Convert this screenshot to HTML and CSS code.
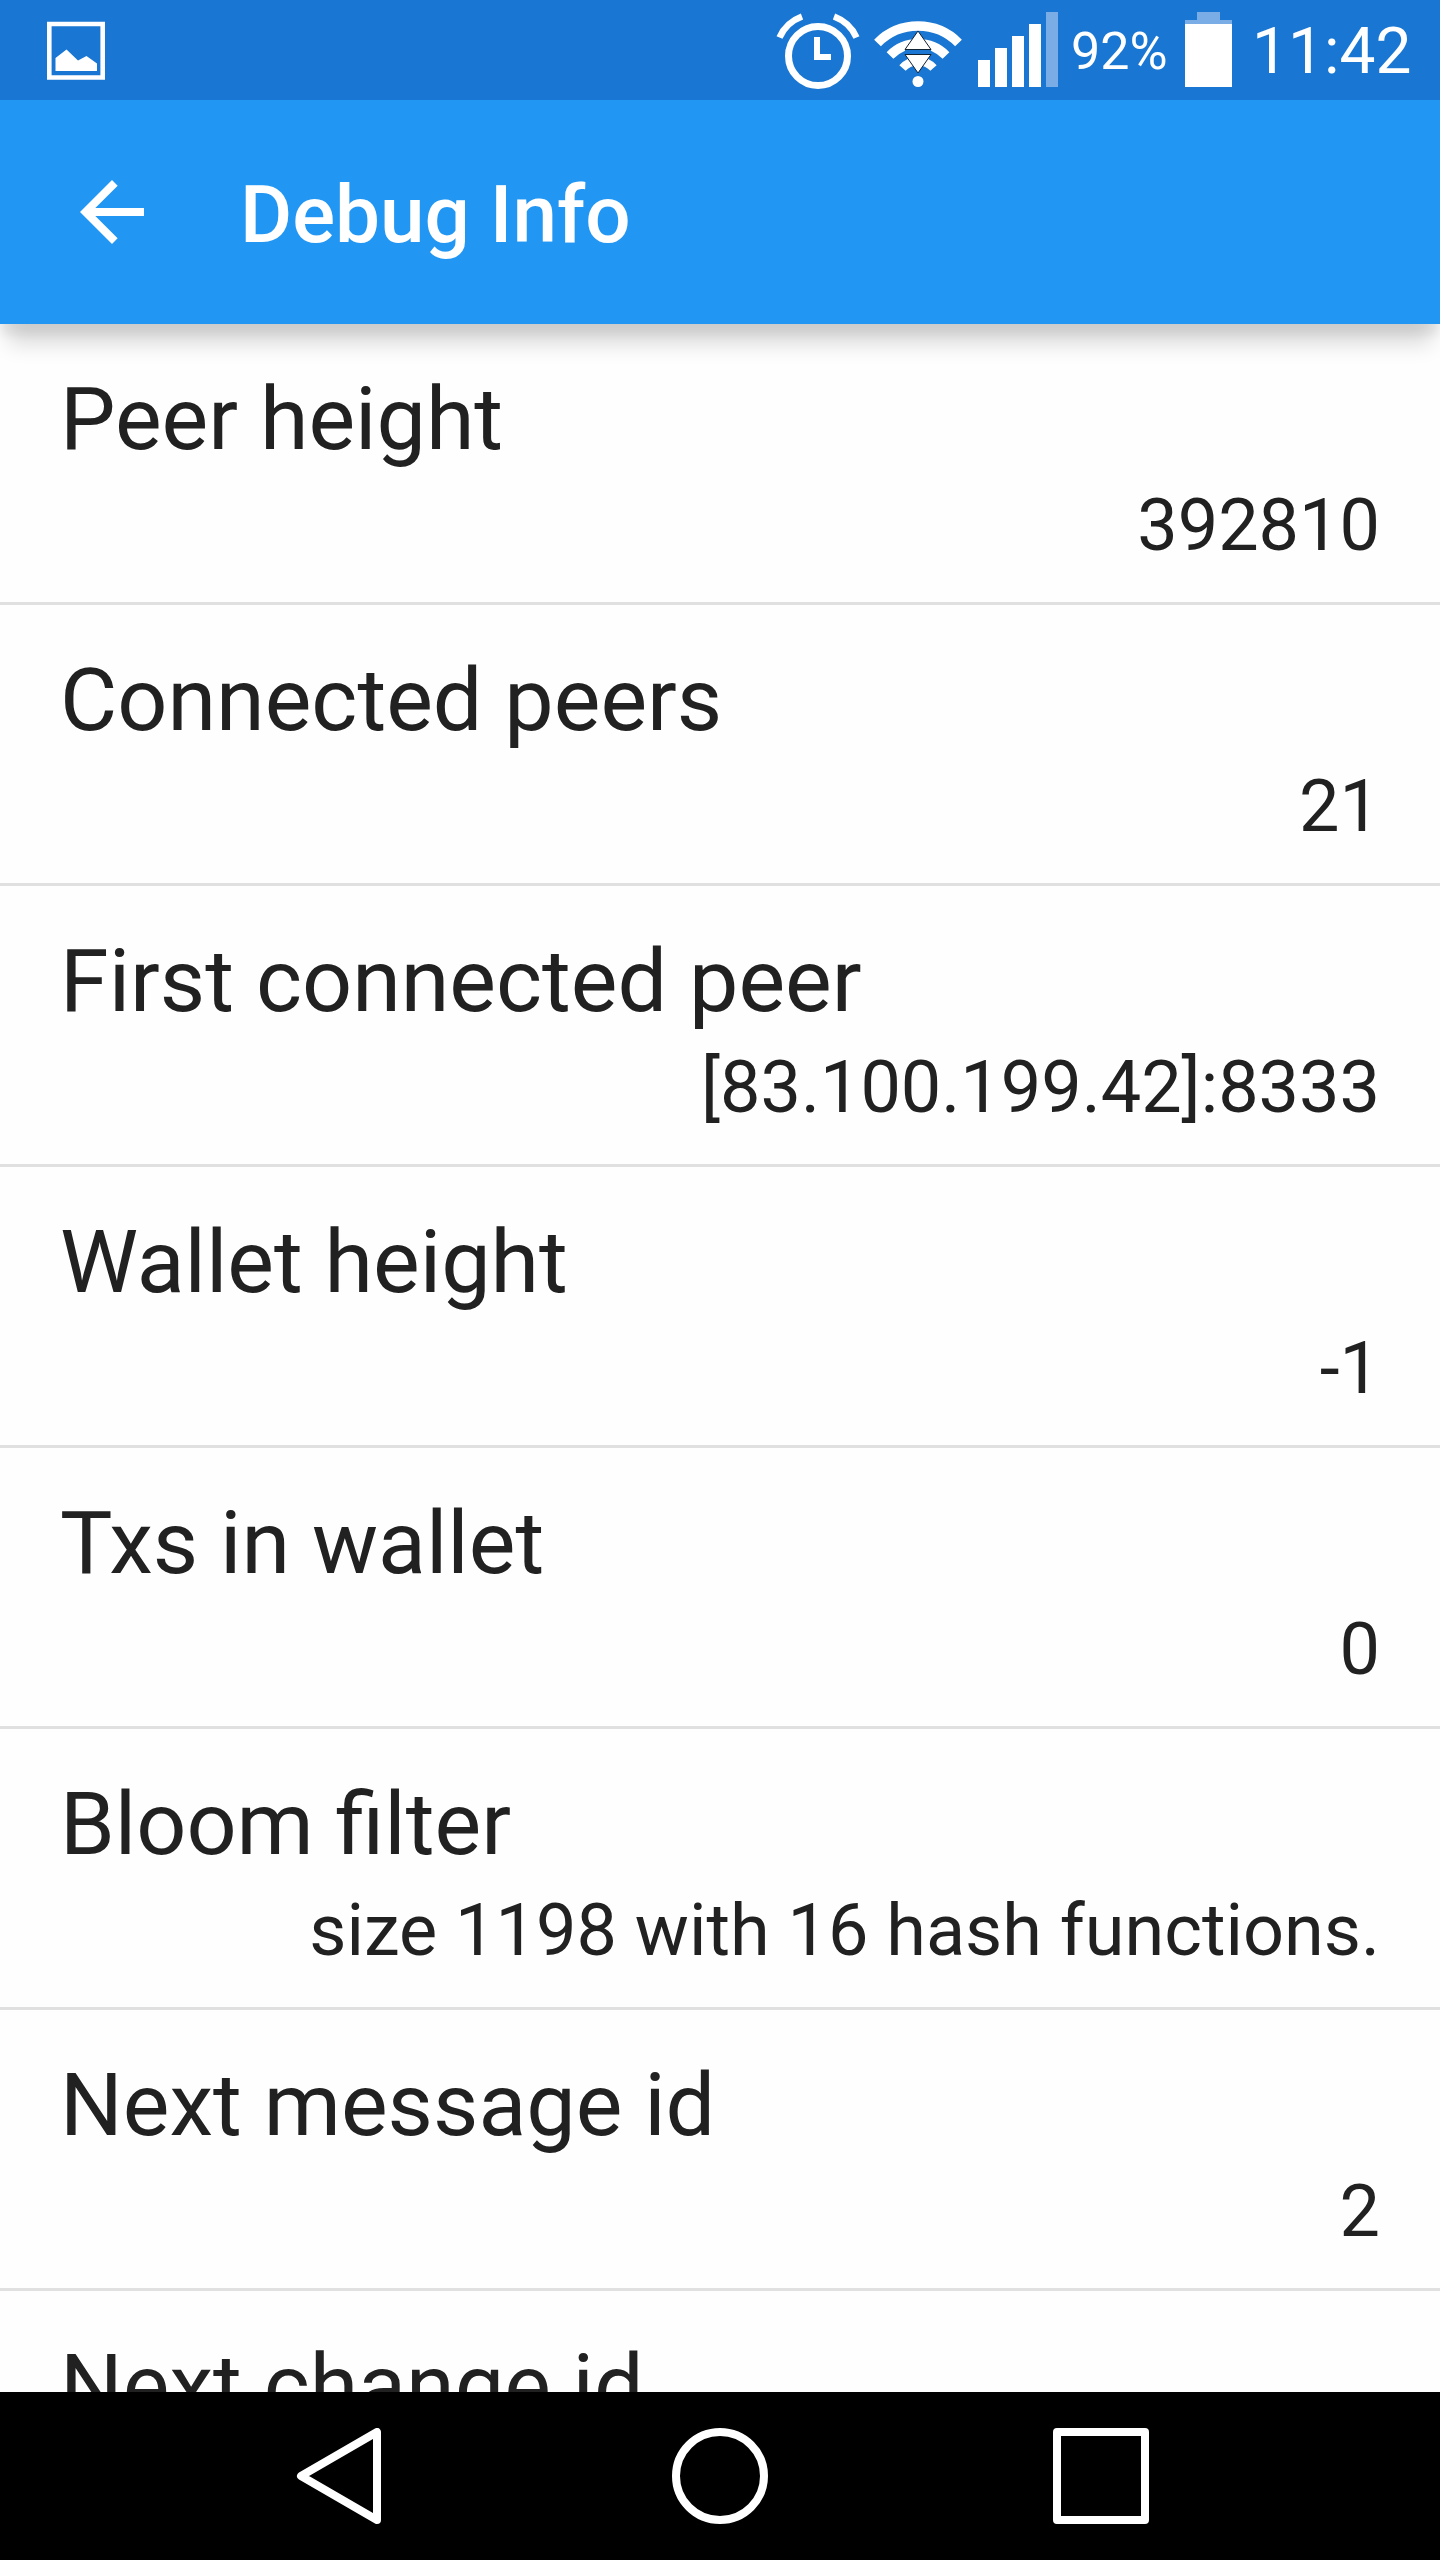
FILE: index.html
```html
<!DOCTYPE html>
<html lang="en">
<head>
<meta charset="utf-8">
<meta name="viewport" content="width=device-width, initial-scale=1">
<title>Debug Info</title>
<link rel="stylesheet" href="styles.css">
</head>
<body>
<div class="status-bar">
  <svg class="status-picture" width="60" height="60" viewBox="0 0 60 60" aria-hidden="true">
    <path d="M3.300 4H56.700V57.500H3.300Z" fill="none" stroke="#fff" stroke-width="4.600"/>
    <path d="M9.500 38 20.500 29.500 32 40.500 40.500 36 51 43.500V51H9.500Z" fill="#fff"/>
  </svg>
  <svg width="86" height="100" viewBox="775 0 86 100" aria-hidden="true">
    <g fill="none" stroke="#fff">
      <circle cx="818" cy="56" r="29.500" stroke-width="7"/>
      <path d="M817 37V57H831" stroke-width="6"/>
      <path d="M779.500 37.500Q786 22.500 802 16.500M856.500 37.500Q850 22.500 834 16.500" stroke-width="6.500"/>
    </g>
  </svg>
  <svg width="92" height="100" viewBox="873 0 92 100" aria-hidden="true">
    <g fill="none" stroke="#fff">
      <path d="M877.500 43A57 57 0 0 1 958.500 43" stroke-width="9.500"/>
      <path d="M890 55.500A39.500 39.500 0 0 1 946 55.500" stroke-width="9.500"/>
      <path d="M902.500 68A21 21 0 0 1 933.500 68" stroke-width="8.500"/>
    </g>
    <circle cx="918" cy="81.500" r="5.500" fill="#fff"/>
    <path d="M905 49.500H931V54.500H905Z" fill="#1976d2"/>
    <path d="M918 31 931 49.500H905ZM905 54.500H931L918 73Z" fill="#fff" stroke="#123" stroke-width="1"/>
  </svg>
  <svg width="82" height="100" viewBox="977 0 82 100" aria-hidden="true">
    <path d="M978 60h12v27h-12zM995 48h12v39h-12zM1012 36h12v51h-12zM1029 24h12v63h-12z" fill="#fff"/>
    <path d="M1046 12h12v75h-12z" fill="#7aade5"/>
  </svg>
  <span class="battery-level">92%</span>
  <svg width="60" height="100" viewBox="1180 0 60 100" aria-hidden="true">
    <path d="M1197 12h23v8h12v4h-47v-4h12z" fill="#7aade5"/>
    <path d="M1185 24h47v63h-47z" fill="#fff"/>
  </svg>
  <time class="clock">11:42</time>
</div>

<header class="app-bar">
  <button class="up-button" type="button" aria-label="Navigate up">
    <svg width="96" height="96" viewBox="0 0 24 24" aria-hidden="true">
      <path d="M20 11H7.830l5.590-5.590L12 4l-8 8 8 8 1.410-1.410L7.830 13H20v-2z" fill="#fff"/>
    </svg>
  </button>
  <h1 class="title">Debug Info</h1>
</header>

<main class="content">
  <dl class="info-list">
    <div class="row"><dt class="label">Peer height</dt><dd class="value">392810</dd></div>
    <div class="row"><dt class="label">Connected peers</dt><dd class="value">21</dd></div>
    <div class="row"><dt class="label">First connected peer</dt><dd class="value">[83.100.199.42]:8333</dd></div>
    <div class="row"><dt class="label">Wallet height</dt><dd class="value">-1</dd></div>
    <div class="row"><dt class="label">Txs in wallet</dt><dd class="value">0</dd></div>
    <div class="row"><dt class="label">Bloom filter</dt><dd class="value">size 1198 with 16 hash functions.</dd></div>
    <div class="row"><dt class="label">Next message id</dt><dd class="value">2</dd></div>
    <div class="row"><dt class="label">Next change id</dt></div>
  </dl>
</main>

<nav class="nav-bar" aria-label="System">
  <button class="nav-button" type="button" aria-label="Back">
    <svg width="96" height="96" viewBox="0 0 96 96" aria-hidden="true"><path d="M86 4V92L10 48Z" fill="none" stroke="#fff" stroke-width="8" stroke-linejoin="round"/></svg>
  </button>
  <button class="nav-button" type="button" aria-label="Home">
    <svg width="96" height="96" viewBox="0 0 96 96" aria-hidden="true"><circle cx="48" cy="48" r="44" fill="none" stroke="#fff" stroke-width="8"/></svg>
  </button>
  <button class="nav-button" type="button" aria-label="Recent apps">
    <svg width="96" height="96" viewBox="0 0 96 96" aria-hidden="true"><path d="M4 4H92V92H4Z" fill="none" stroke="#fff" stroke-width="8" stroke-linejoin="round"/></svg>
  </button>
</nav>
</body>
</html>
```
FILE: styles.css
```css
* {
  box-sizing: border-box;
}

body {
  margin: 0;
  height: 100vh;
  display: flex;
  flex-direction: column;
  background: #fefefe;
  color: #212121;
  font-family: Roboto, "Liberation Sans", sans-serif;
}

button {
  padding: 0;
  border: 0;
  background: none;
}

svg {
  display: block;
  flex: none;
}

.status-bar {
  flex: none;
  display: flex;
  align-items: center;
  gap: 12px;
  height: 100px;
  padding: 0 28px 0 46px;
  background: #1976d2;
  color: #fff;
}

.status-picture {
  margin-right: auto;
}

.battery-level,
.clock {
  padding-top: 4px;
}

.battery-level {
  min-width: 97px;
  font-size: 52px;
  line-height: 64px;
}

.clock {
  min-width: 160px;
  font-size: 64px;
  line-height: 76px;
}

.app-bar {
  position: relative;
  z-index: 1;
  flex: none;
  display: flex;
  align-items: center;
  gap: 80px;
  height: 224px;
  padding: 0 64px;
  background: #2196f3;
  box-shadow: 0 10px 10px 0 rgba(0, 0, 0, 0.07), 0 28px 20px -8px rgba(0, 0, 0, 0.14);
}

.title {
  margin: 0;
  padding-top: 6px;
  color: #fff;
  font-size: 80px;
  font-weight: 500;
  line-height: 94px;
}

.content {
  flex: 1;
  min-height: 0;
  overflow: hidden;
}

.info-list {
  margin: 0;
}

.row {
  padding: 43px 60px 34px;
  border-bottom: 3px solid #e0e0e0;
}

.label {
  font-size: 88px;
  line-height: 104px;
}

.value {
  margin: 13px 0 0;
  font-size: 72px;
  line-height: 84px;
  text-align: right;
}

.nav-bar {
  flex: none;
  display: flex;
  height: 168px;
  padding: 0 148px;
  background: #000;
}

.nav-button {
  flex: 1;
  display: flex;
  align-items: center;
  justify-content: center;
}
```
